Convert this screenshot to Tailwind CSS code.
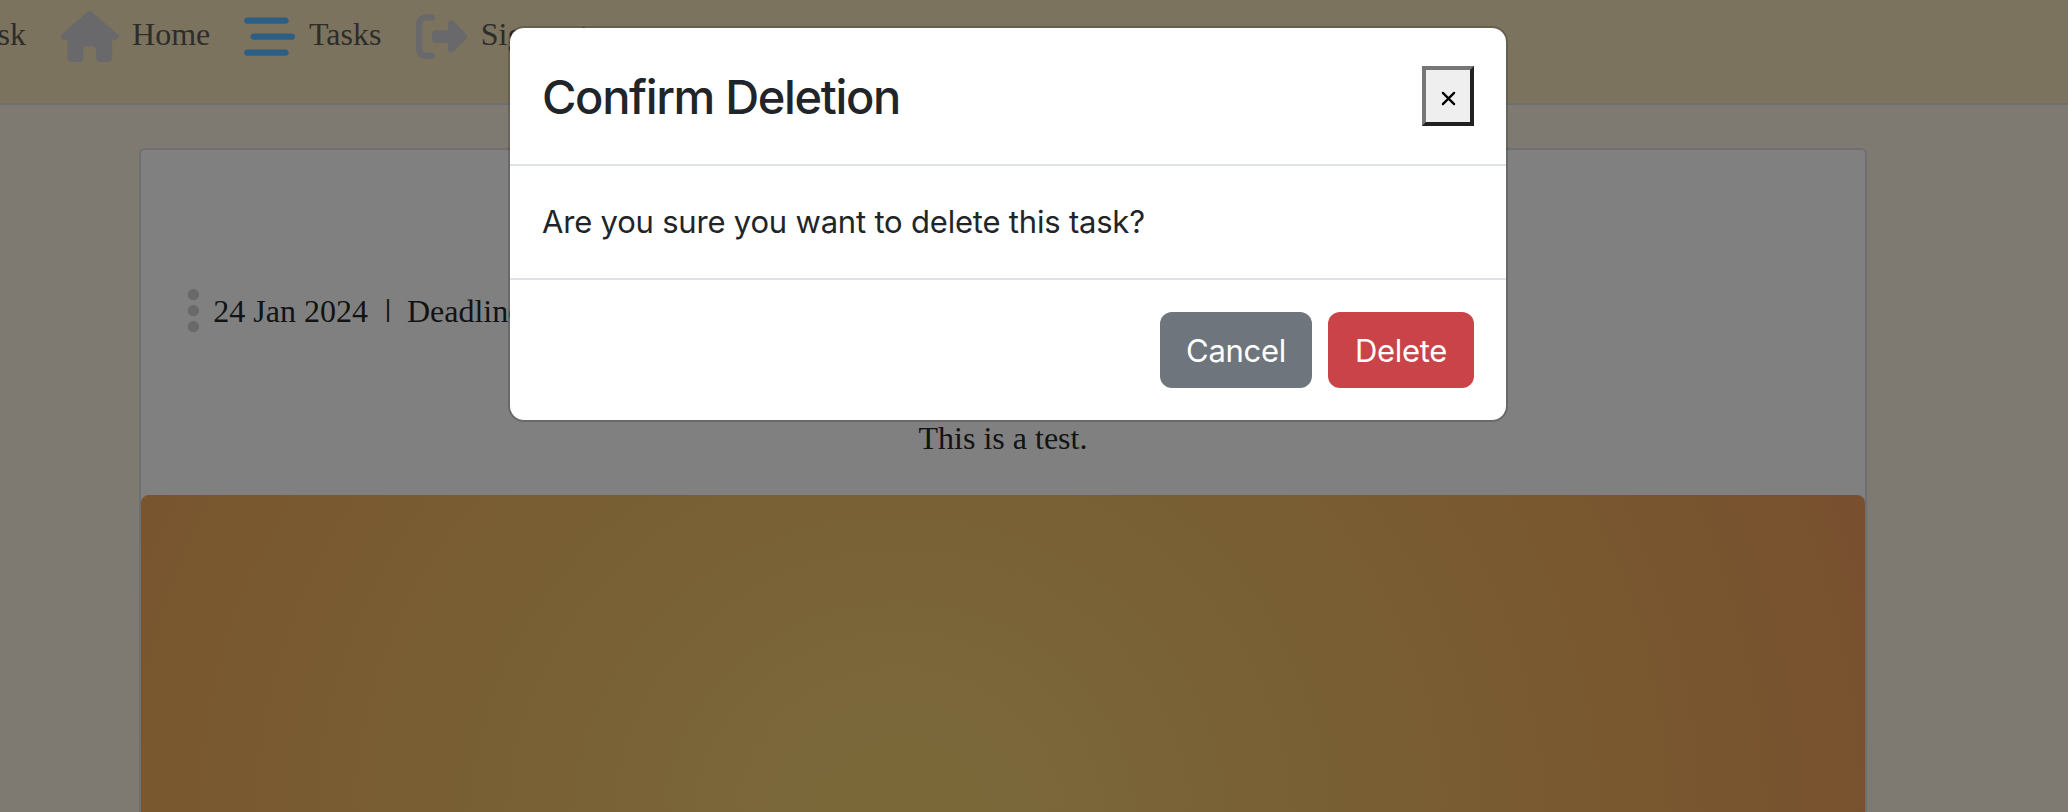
<!DOCTYPE html>
<html lang="en">
<head>
<meta charset="utf-8">
<title>Task</title>
<script src="https://cdn.jsdelivr.net/npm/@tailwindcss/browser@4"></script>
</head>
<body class="relative flow-root h-[812px] w-[2068px] overflow-hidden bg-[#7e7971] font-['Liberation_Serif',serif] text-[32px] leading-[48px]">
  <nav class="flex h-[105px] items-start border-b-2 border-[#6f6f72] bg-[#7c735f] pt-[10px] text-[#2d2d2b]">
    <a class="flex w-[26px] justify-end whitespace-nowrap">Task</a>
    <a class="ml-[35px] flex gap-[13.5px]">
      <svg class="mt-px h-[51.2px] w-[57.6px] fill-[#69696b]" viewBox="0 0 576 512"><path d="M575.8 255.5c0 18-15 32.1-32 32.1h-32l.7 160.2c0 2.7-.2 5.4-.5 8.1V472c0 22.1-17.9 40-40 40H456c-1.1 0-2.2 0-3.3-.1c-1.4 .1-2.8 .1-4.2 .1H416 392c-22.1 0-40-17.9-40-40V448 384c0-17.7-14.3-32-32-32H256c-17.7 0-32 14.3-32 32v64 24c0 22.1-17.9 40-40 40H160 128.1c-1.5 0-3-.1-4.5-.2c-1.2 .1-2.4 .2-3.6 .2H104c-22.1 0-40-17.9-40-40V360c0-.9 0-1.9 .1-2.8V287.6H32c-18 0-32-14-32-32.1c0-9 3-17 10-24L266.4 8c7-7 15-8 22-8s15 2 21 7L564.8 231.5c8 7 12 15 11 24z"/></svg>
      <span>Home</span>
    </a>
    <a class="ml-[34px] flex gap-[13.5px]">
      <svg class="mt-px size-[51.2px] fill-[#2d5f86]" viewBox="0 0 512 512"><path d="M0 96C0 78.3 14.3 64 32 64H416c17.7 0 32 14.3 32 32s-14.3 32-32 32H32C14.3 128 0 113.7 0 96zM64 256c0-17.7 14.3-32 32-32H480c17.7 0 32 14.3 32 32s-14.3 32-32 32H96c-17.7 0-32-14.3-32-32zM448 416c0 17.7-14.3 32-32 32H32c-17.7 0-32-14.3-32-32s14.3-32 32-32H416c17.7 0 32 14.3 32 32z"/></svg>
      <span>Tasks</span>
    </a>
    <a class="ml-[34.7px] flex gap-[13.5px] whitespace-nowrap">
      <svg class="mt-px size-[51.2px] fill-[#69696b]" viewBox="0 0 512 512"><path d="M377.9 105.9L500.7 228.7c7.2 7.2 11.3 17.1 11.3 27.3s-4.1 20.1-11.3 27.3L377.9 406.1c-6.4 6.4-15 9.9-24 9.9c-18.7 0-33.9-15.2-33.9-33.9l0-62.1-128 0c-17.7 0-32-14.3-32-32l0-64c0-17.7 14.3-32 32-32l128 0 0-62.1c0-18.7 15.2-33.9 33.9-33.9c9 0 17.6 3.6 24 9.9zM160 96L96 96c-17.7 0-32 14.3-32 32l0 256c0 17.7 14.3 32 32 32l64 0c17.7 0 32 14.3 32 32s-14.3 32-32 32l-64 0c-53 0-96-43-96-96L0 128C0 75 43 32 96 32l64 0c17.7 0 32 14.3 32 32s-14.3 32-32 32z"/></svg>
      <span>Sign out</span>
    </a>
  </nav>

  <main class="mt-[43px] ml-[139px] h-[664px] w-[1728px] rounded-t-md border-2 border-b-0 border-[#6f6f72] bg-[#808080] text-[#111314]">
    <div class="flex items-start pt-[137px] pl-[46px]">
      <svg class="-mt-[2px] h-[51.2px] w-[12.8px] fill-[#69696b]" viewBox="0 0 128 512"><circle cx="64" cy="96" r="56"/><circle cx="64" cy="256" r="56"/><circle cx="64" cy="416" r="56"/></svg>
      <p class="ml-[13.5px] flex whitespace-pre"><span>24 Jan 2024</span><span class="mr-[16px] ml-[17px] -mt-[2px] font-['Liberation_Sans',sans-serif] text-[23px]">|</span><span>Deadline:</span></p>
    </div>
    <p class="mt-[78px] text-center">This is a test.</p>
    <div class="mt-[33px] h-[317px] rounded-t-lg bg-[radial-gradient(ellipse_1000px_950px_at_44%_105%,#7b693a_0%,#7a6638_18%,#796035_38%,#79582f_72%,#78502f_100%)]"></div>
  </main>

  <div role="dialog" class="absolute top-[26px] left-[508px] w-[1000px] rounded-[16px] border-2 border-black/[.175] bg-white bg-clip-padding font-['Inter',sans-serif] text-[31px] text-[#212529]">
    <header class="flex items-center justify-between border-b-2 border-[#dee2e6] p-8">
      <h5 class="mt-px -mb-px text-[47px] leading-[72px] font-medium tracking-[-1.35px]">Confirm Deletion</h5>
      <button aria-label="Close" class="flex h-[60px] w-[52px] items-center justify-center border-4 border-t-[#767676] border-r-[#212121] border-b-[#212121] border-l-[#767676] bg-[#efefef] pt-[5px] text-black"><svg class="size-[15px]" viewBox="0 0 16 16" fill="none" stroke="currentColor" stroke-width="2.4" stroke-linecap="round"><path d="M2 2l12 12M14 2L2 14"/></svg></button>
    </header>
    <p class="p-8 leading-[48px] tracking-[-.2px]">Are you sure you want to delete this task?</p>
    <footer class="flex justify-end gap-4 border-t-2 border-[#dee2e6] p-8 tracking-[-.3px] text-white">
      <button class="flex h-[76px] w-[152px] items-center justify-center rounded-[12px] bg-[#6e757d] pt-0.5">Cancel</button>
      <button class="flex h-[76px] w-[146px] items-center justify-center rounded-[12px] bg-[#ca4349] pt-0.5">Delete</button>
    </footer>
  </div>
</body>
</html>
